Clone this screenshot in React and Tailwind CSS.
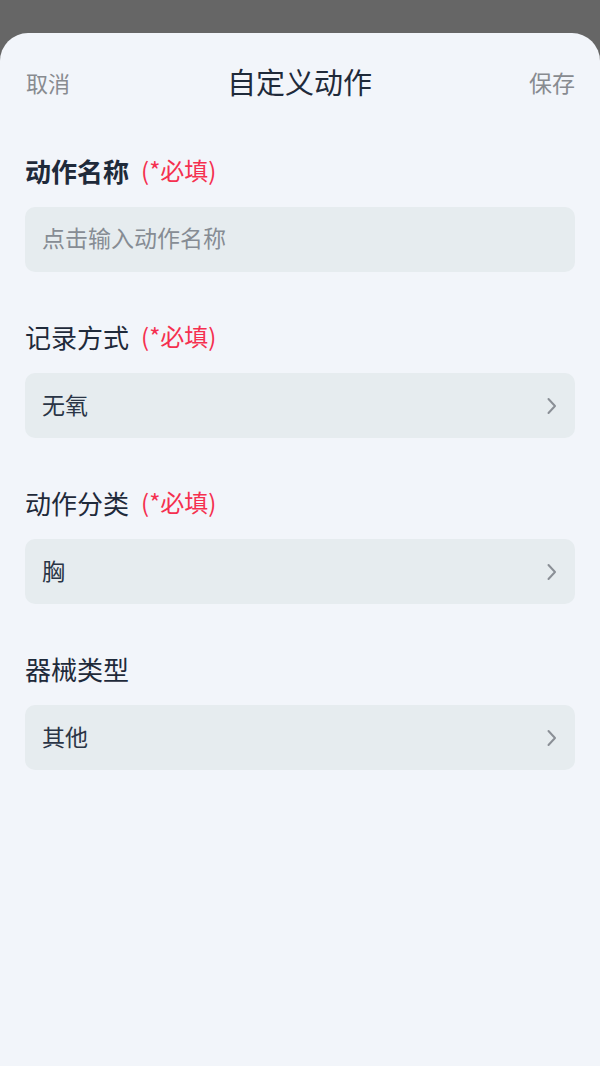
const font = { fontFamily: '"Noto Sans CJK SC", "Noto Sans", sans-serif' };

function Chevron() {
  return (
    <svg width="14" height="20" viewBox="0 0 14 20" fill="none" className="shrink-0">
      <path d="M3.5 3l6.5 7-6.5 7" stroke="#8a8f96" strokeWidth="2" strokeLinecap="round" strokeLinejoin="round" />
    </svg>
  );
}

function Field({ label, required, bold, value, placeholder, select, first }) {
  return (
    <div className={first ? "mt-[18px]" : "mt-[47px]"}>
      <div className="flex items-center h-[34px]">
        <span className={`text-[26px] text-[#1f2a3a] ${bold ? "font-bold" : ""}`}>{label}</span>
        {required && <span className="ml-[12px] text-[24px] text-[#f5304f]">(*必填)</span>}
      </div>
      <div className="mt-[20px] h-[65px] rounded-[10px] bg-[#e6ecef] flex items-center justify-between pl-[17px] pr-[16px]">
        {value ? (
          <span className="text-[23px] text-[#2a3546] pb-[3px]">{value}</span>
        ) : (
          <span className="text-[23px] text-[#868c94] pb-[4px]">{placeholder}</span>
        )}
        {select && <Chevron />}
      </div>
    </div>
  );
}

export default function App() {
  return (
    <div className="w-[600px] h-[1066px] bg-[#666666] pt-[33px]" style={font}>
      <div className="h-full bg-[#f2f5fa] rounded-t-[28px] px-[25px]">
        <div className="h-[102px] pb-[4px] flex items-center justify-between">
          <span className="text-[22px] text-[#888b90] pl-[1px]">取消</span>
          <span className="text-[29px] text-[#1f2a3a]">自定义动作</span>
          <span className="text-[23px] text-[#888b90]">保存</span>
        </div>
        <Field first label="动作名称" required bold placeholder="点击输入动作名称" />
        <Field label="记录方式" required value="无氧" select />
        <Field label="动作分类" required value="胸" select />
        <Field label="器械类型" value="其他" select />
      </div>
    </div>
  );
}
